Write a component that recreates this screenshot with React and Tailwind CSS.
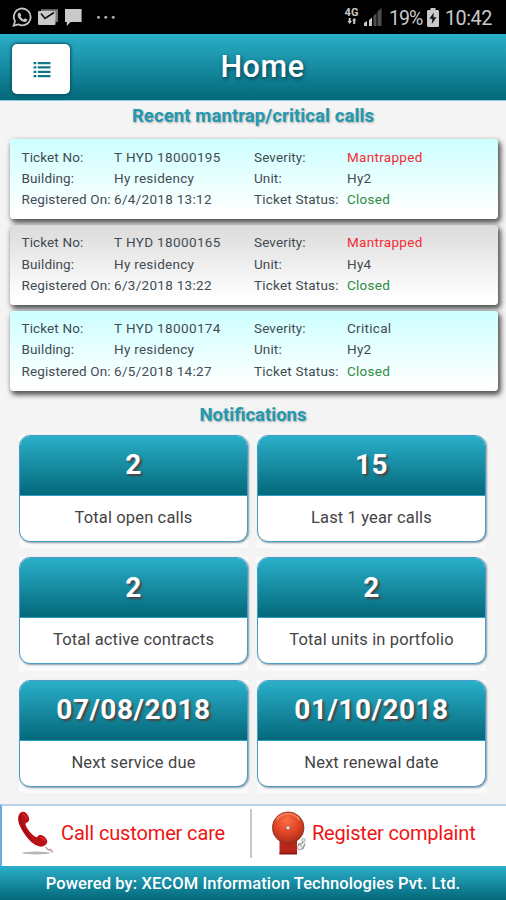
const tickets = [
  { no: "T HYD 18000195", date: "6/4/2018 13:12", severity: "Mantrapped", unit: "Hy2" },
  { no: "T HYD 18000165", date: "6/3/2018 13:22", severity: "Mantrapped", unit: "Hy4" },
  { no: "T HYD 18000174", date: "6/5/2018 14:27", severity: "Critical", unit: "Hy2" },
];

const stats = [
  ["2", "Total open calls"],
  ["15", "Last 1 year calls"],
  ["2", "Total active contracts"],
  ["2", "Total units in portfolio"],
  ["07/08/2018", "Next service due"],
  ["01/10/2018", "Next renewal date"],
];

function StatusBar() {
  return (
    <div className="flex h-[34px] items-center justify-between bg-black pl-3 pr-[14px] text-[#c9c9c9]">
      <svg width="106" height="24" viewBox="12 5 106 24" fill="none">
        <path d="M13.6 25.7l1.4-4.5a8.4 8.4 0 1 1 3.4 3.2z" stroke="#c4c4c4" strokeWidth="1.8" />
        <path d="M18.6 12.9l1.5-.2 1.2 2.6-.8 1.3c.8 1.5 1.8 2.3 3.2 2.9l1.3-1.3 2.4 1.3c0 1.6-1.2 2.4-2.6 2.4-3.8-.3-7-4-7.2-6.7 0-.9.3-1.7 1-2.3z" fill="#c4c4c4" />
        <path d="M41 11V9.2h17V22h-1.7" fill="#777" />
        <rect x="38" y="11" width="17.5" height="14" rx="1.2" fill="#c9c9c9" />
        <path d="M41 13.5l4 5 9-6" stroke="#111" strokeWidth="1.6" />
        <path d="M65 9h16.6v13H70.6l-3.8 4v-4H65z" fill="#c9c9c9" />
        <circle cx="98.5" cy="17.3" r="1.5" fill="#aaa" />
        <circle cx="105.8" cy="17.3" r="1.5" fill="#aaa" />
        <circle cx="113.2" cy="17.3" r="1.5" fill="#aaa" />
      </svg>
      <div className="flex items-center">
        <div className="mr-[5px] flex h-5 w-[15px] flex-col items-center">
          <span className="text-[11px] font-bold leading-[11px]">4G</span>
          <svg width="10" height="7" viewBox="0 0 10 7">
            <path d="M1.7 0h2v3H5L2.7 6 .4 3h1.3zM7.3 0l2.2 2.5H8.2V6h-2V2.5H5z" fill="#c9c9c9" />
          </svg>
        </div>
        <svg className="mr-[7px]" width="18" height="18" viewBox="0 0 18 18">
          <path d="M0 18v-3l3-2v5zM5 18v-6l3-2.6V18z" fill="#c9c9c9" />
          <path d="M9.5 18V8l3-3v13zM13.5 18V3.5L17.5 0v18z" fill="#4e4e4e" />
        </svg>
        <span className="mt-[3px] w-[34px] whitespace-nowrap text-[19.5px] tracking-[-0.9px]">19%</span>
        <svg className="ml-[4px] mr-[6px]" width="12" height="19" viewBox="0 0 12 19">
          <path d="M3.5 0h5v2H11l1 1v15l-1 1H1l-1-1V3l1-1h2.5z" fill="#c9c9c9" />
          <path d="M6.8 4.5L2.4 10.8h3L4.7 16 9.4 9.2h-3z" fill="#111" />
        </svg>
        <span className="mt-[3px] w-[47px] whitespace-nowrap text-[19.8px] tracking-[-0.5px]">10:42</span>
      </div>
    </div>
  );
}

function Ticket({ ticket, grey }) {
  const bg = grey
    ? "bg-[linear-gradient(to_bottom,#dbdbdb,#ffffff_92%)]"
    : "bg-[linear-gradient(to_bottom,#cdffff,#ffffff_92%)]";
  return (
    <div
      className={`grid h-20 grid-cols-[92.5px_140px_93px_1fr] grid-rows-[repeat(3,21.2px)] rounded-[4px] pl-[11.5px] pt-[7.2px] text-[13.5px] leading-[21.2px] tracking-[0.12px] whitespace-nowrap text-[#424b52] shadow-[2px_3px_5px_1px_#555555] ${bg}`}
    >
      <span>Ticket No:</span>
      <span className="tracking-[0.37px]">{ticket.no}</span>
      <span>Severity:</span>
      <span className={ticket.severity === "Critical" ? "tracking-[0.3px]" : "tracking-[0.3px] text-[#f32c34]"}>
        {ticket.severity}
      </span>
      <span>Building:</span>
      <span className="tracking-[0.28px]">Hy residency</span>
      <span>Unit:</span>
      <span className="tracking-[0.3px]">{ticket.unit}</span>
      <span>Registered On:</span>
      <span className="tracking-[0.3px]">{ticket.date}</span>
      <span className="tracking-[0.2px]">Ticket Status:</span>
      <span className="tracking-[0.25px] text-[#2f8c40]">Closed</span>
    </div>
  );
}

function Stat({ value, label }) {
  return (
    <div className="h-[113.3px] bg-[#fafafa]">
      <div className="flex h-[107px] flex-col overflow-hidden rounded-[11px] border border-[#4a9bc8] bg-white shadow-[1px_1px_2px_#8a9aa5]">
        <div className="flex h-[60px] items-center justify-center border-b border-[#2d9fc0] bg-[linear-gradient(to_bottom,#2aafc9,#04687a)] text-[28px] font-bold tracking-[0.5px] text-white [text-shadow:2px_2px_2px_#4c4444]">
          {value}
        </div>
        <div className="flex flex-1 items-center justify-center text-[16.5px] tracking-[0.14px] text-[#444444]">{label}</div>
      </div>
    </div>
  );
}

function PhoneIcon() {
  return (
    <svg width="37" height="45" viewBox="17 808 37 45" fill="none">
      <ellipse cx="36" cy="851" rx="14" ry="1.5" fill="#b8b8b8" />
      <path d="M45.5 845l3 3 2-.5 2 3" stroke="#c9a0a6" strokeWidth="1.6" />
      <path d="M22.5 809.8c2.4-.5 4.6 1.6 5.8 4.3 1.1 2.4 1.2 4.6-.2 5.7-1.1.9-2.6.7-2.6 2.3.5 4.3 6.6 11.3 10.8 13.1 1.2.4 1.2-1.6 3.2-2.1 3.2-.4 6.6 2.5 7.6 5.5.7 2.7-1.4 5.2-4.6 5.9-3.2.5-6-.5-8.6-2.4-6.3-4.8-12.1-13-14.8-20.1-2-5.4-.8-11.5 3.4-12.2z" fill="#ba1116" />
      <path d="M20 813.5c-1 5 3.5 15.2 10.5 22.8" stroke="#7c0a0e" strokeWidth="1" />
      <path d="M23.5 811.8c1.6 1 2.4 2.5 2.8 4.3M40.5 835.3c2 .4 3.5 1.6 4.2 3.2" stroke="#dd3438" strokeWidth="1.3" strokeLinecap="round" />
    </svg>
  );
}

function BellIcon() {
  return (
    <svg width="38" height="46" viewBox="270 808 38 46">
      <defs>
        <radialGradient id="dome" cx="45%" cy="28%" r="72%">
          <stop offset="0" stopColor="#fa6f47" />
          <stop offset="0.5" stopColor="#e44827" />
          <stop offset="1" stopColor="#a92c17" />
        </radialGradient>
      </defs>
      <path d="M279.5 836H297v16.3h-17.5z" fill="#b8261b" />
      <path d="M279.5 851.5H297" stroke="#801810" strokeWidth="1.6" />
      <path d="M298 842.5l4-1 2.5-4M298 847.5l5-1 2-5" fill="none" stroke="#999" strokeWidth="1.4" />
      <circle cx="303.5" cy="838.3" r="1.8" fill="#e6e6e6" stroke="#999" strokeWidth="0.8" />
      <circle cx="299.8" cy="845.5" r="2.4" fill="#eee" stroke="#999" strokeWidth="0.8" />
      <circle cx="288.2" cy="825.7" r="15.8" fill="url(#dome)" stroke="#82301f" strokeWidth="0.8" />
      <path d="M276.5 818a13.8 13.8 0 0 1 23 0" fill="none" stroke="#ff9974" strokeWidth="1.6" opacity="0.65" />
      <circle cx="288" cy="826" r="2.9" fill="#c13f26" />
      <circle cx="288" cy="825.8" r="2.1" fill="#dcc7c1" />
    </svg>
  );
}

export default function App() {
  return (
    <div className="flex h-[900px] w-[506px] flex-col overflow-hidden bg-[#f4f4f4] font-[Roboto,sans-serif]">
      <StatusBar />
      <header className="grid h-[67px] grid-cols-[58px_1fr_46px] items-center border-b border-[#8fcbd6] bg-[linear-gradient(to_bottom,#2aafc9,#04687a)] pl-3 pr-[9px]">
        <button className="mt-[3px] flex h-[50px] w-[58px] items-center justify-center rounded-[5px] bg-white shadow-[0_0_3px_1px_#064d60]">
          <svg className="ml-[2px] mt-[2px]" width="18" height="16" viewBox="0 0 18 17" fill="#107786">
            <path d="M0 0h3v2.4H0zM4.5 0H18v2.4H4.5zM0 4.6h3V7H0zM4.5 4.6H18V7H4.5zM0 9.2h3v2.4H0zM4.5 9.2H18v2.4H4.5zM0 13.8h3v2.4H0zM4.5 13.8H18v2.4H4.5z" />
          </svg>
        </button>
        <h1 className="pl-1 text-center text-[30.5px] font-medium tracking-[0.6px] text-white [text-shadow:1px_2px_4px_#063c48]">Home</h1>
      </header>

      <h2 className="h-[38.4px] pt-px text-center text-[18.5px] font-bold leading-[29px] tracking-[0.1px] text-[#2399b0] [text-shadow:1px_1px_2px_#aaaaaa]">
        Recent mantrap/critical calls
      </h2>
      <section className="flex flex-col gap-[5.8px] pl-[10px] pr-[8.5px]">
        {tickets.map((ticket, index) => (
          <Ticket key={ticket.no} ticket={ticket} grey={index === 1} />
        ))}
      </section>

      <h2 className="h-[44px] pt-[9.8px] text-center text-[18.5px] font-bold leading-[29px] text-[#2399b0] [text-shadow:1px_1px_2px_#aaaaaa]">
        Notifications
      </h2>
      <section className="grid grid-cols-2 gap-x-[9px] gap-y-[9px] pl-[19px] pr-5">
        {stats.map(([value, label]) => (
          <Stat key={label} value={value} label={label} />
        ))}
      </section>

      <nav className="mt-auto flex h-[62px] shrink-0 border-l-2 border-t-2 border-l-[#6daadd] border-t-[#bdd0eb] bg-white pb-[7px] text-[20px] text-[#ed1515]">
        <button className="flex w-[248px] items-center pl-[15px] whitespace-nowrap tracking-[-0.14px]">
          <PhoneIcon />
          <span className="ml-[7px]">Call customer care</span>
        </button>
        <div className="mt-[3px] h-[49px] w-[2px] bg-[#c8c8c8]" />
        <button className="flex items-center pl-[18px] whitespace-nowrap tracking-[-0.2px]">
          <BellIcon />
          <span className="ml-1">Register complaint</span>
        </button>
      </nav>
      <footer className="flex h-[34px] shrink-0 items-center justify-center bg-[linear-gradient(to_bottom,#2aafc9,#04687a)] pt-[2px] text-[16.5px] font-medium tracking-[0.1px] text-white">
        Powered by: XECOM Information Technologies Pvt. Ltd.
      </footer>
    </div>
  );
}
